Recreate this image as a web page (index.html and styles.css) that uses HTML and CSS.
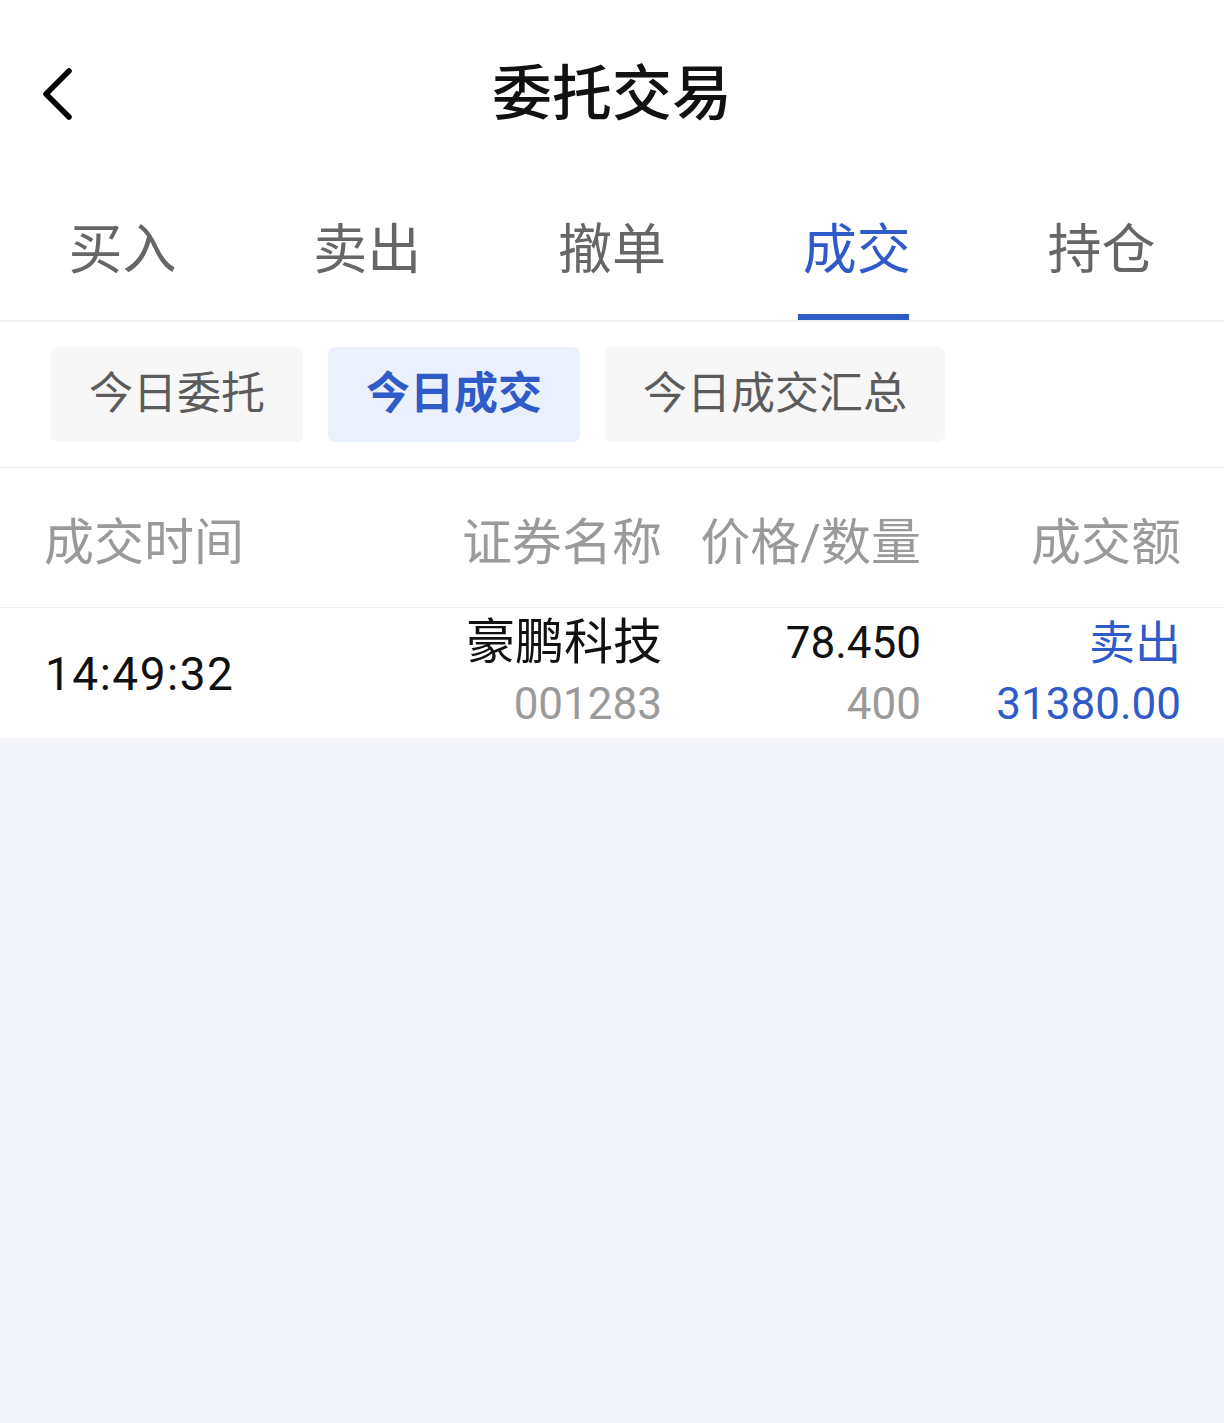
FILE: index.html
```html
<!DOCTYPE html>
<html lang="zh-CN">
<head>
    <meta charset="utf-8"/>
    <meta name="viewport" content="width=device-width, initial-scale=1.0"/>
    <title>委托交易</title>
    <link rel="stylesheet" href="styles.css">
</head>
<body>
<div class="page">
    <div class="top-bar">
        <a class="back" href="#">
            <svg width="40" height="64" viewBox="0 0 40 64">
                <path d="M32 9 L9 32 L32 55" fill="none" stroke="#000" stroke-width="5.5" stroke-linecap="round" stroke-linejoin="round"/>
            </svg>
        </a>
        <h1 class="title">委托交易</h1>
    </div>

    <!-- 主菜单 -->
    <div class="tabs">
        <div class="tab">买入</div>
        <div class="tab">卖出</div>
        <div class="tab">撤单</div>
        <div class="tab active">成交</div>
        <div class="tab">持仓</div>
    </div>

    <div class="sub-tabs">
        <div class="sub-tab">今日委托</div>
        <div class="sub-tab active">今日成交</div>
        <div class="sub-tab">今日成交汇总</div>
    </div>

    <div class="table-head">
        <div class="col col-time">成交时间</div>
        <div class="col col-name">证券名称</div>
        <div class="col col-price">价格/数量</div>
        <div class="col col-amount">成交额</div>
    </div>

    <div class="table-row">
        <div class="col col-time">
            <span class="time">14:49:32</span>
        </div>
        <div class="col col-name">
            <span class="main">豪鹏科技</span>
            <span class="sub">001283</span>
        </div>
        <div class="col col-price">
            <span class="main num">78.450</span>
            <span class="sub">400</span>
        </div>
        <div class="col col-amount">
            <span class="main blue">卖出</span>
            <span class="sub blue">31380.00</span>
        </div>
    </div>
</div>
</body>
</html>
```

FILE: styles.css
```css
html, body {
    margin: 0;
    padding: 0;
}

body {
    font-family: Roboto, "Noto Sans CJK SC", sans-serif;
    background-color: #f3f5fa;
    color: #111;
}

.page {
    background-color: white;
}

.top-bar {
    height: 190px;
    display: flex;
    align-items: center;
    justify-content: center;
    position: relative;
}

.back {
    position: absolute;
    left: 37px;
    top: 62px;
    display: block;
    width: 40px;
    height: 64px;
}

.title {
    margin: 0;
    font-size: 60px;
    font-weight: 500;
    color: #111;
    line-height: 1;
}

.tabs {
    display: flex;
    border-bottom: 2px solid #f0f0f0;
}

.tab {
    flex: 1;
    height: 130px;
    padding-top: 30px;
    box-sizing: border-box;
    line-height: 62px;
    text-align: center;
    font-size: 54px;
    color: #666;
    position: relative;
}

.tab.active {
    color: #2f5bc9;
}

.tab.active::after {
    content: "";
    position: absolute;
    left: 50%;
    bottom: 0;
    width: 111px;
    height: 6px;
    margin-left: -59px;
    background-color: #2f5bc9;
}

.sub-tabs {
    display: flex;
    gap: 25px;
    padding: 25px 51px 25px;
    border-bottom: 1px solid #f0f0f0;
}

.sub-tab {
    height: 95px;
    line-height: 95px;
    padding: 0 38px;
    font-size: 44px;
    color: #5c5c5c;
    background-color: #f7f7f7;
    border-radius: 7px;
}

.sub-tab.active {
    background-color: #ebf1fc;
    color: #2f5bc9;
    font-weight: bold;
}

.table-head,
.table-row {
    display: grid;
    grid-template-columns: 386px 232px 259px 260px;
    padding: 0 42px 0 44px;
}

.table-head {
    height: 139px;
    align-items: center;
    font-size: 50px;
    color: #9a9a9a;
    border-bottom: 1px solid #f0f0f0;
}

.table-row {
    height: 130px;
    align-items: center;
}

.col {
    display: flex;
    flex-direction: column;
    align-items: flex-end;
    text-align: right;
}

.col-time {
    align-items: flex-start;
    text-align: left;
}

.time {
    font-size: 46px;
    letter-spacing: 1.5px;
    color: #111;
    padding-top: 2px;
    margin-left: 1px;
}

.main {
    font-size: 49px;
    line-height: 62px;
    color: #111;
}

.main.num {
    font-size: 44px;
}

.sub {
    font-size: 44px;
    line-height: 60px;
    color: #9a9a9a;
}

.blue {
    color: #2f5bc9;
}

.main.blue {
    font-size: 46px;
}
```
